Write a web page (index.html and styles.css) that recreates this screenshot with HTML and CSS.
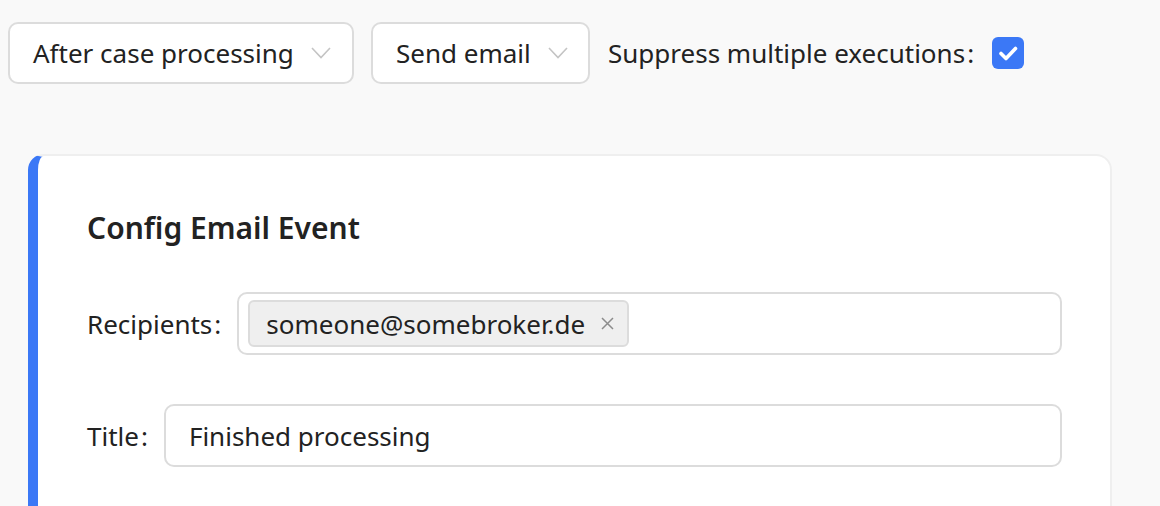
FILE: index.html
```html
<!DOCTYPE html>
<html>
<head>
<meta charset="utf-8">
<link rel="stylesheet" href="styles.css">
</head>
<body>
<div class="page">
  <div class="toolbar">
    <div class="select sel-1">
      <span class="select-text">After case processing</span>
      <svg class="chev" viewBox="0 0 20 12" width="20" height="12"><path d="M1 1 L10 10.5 L19 1" fill="none" stroke="#c4c4c4" stroke-width="1.6"/></svg>
    </div>
    <div class="select sel-2">
      <span class="select-text">Send email</span>
      <svg class="chev" viewBox="0 0 20 12" width="20" height="12"><path d="M1 1 L10 10.5 L19 1" fill="none" stroke="#c4c4c4" stroke-width="1.6"/></svg>
    </div>
    <div class="suppress">
      <span class="label">Suppress multiple executions<span class="colon">:</span></span>
      <span class="checkbox">
        <svg viewBox="0 0 32 32" width="32" height="32"><path d="M9 16.5 L14 21.5 L23.5 11.5" fill="none" stroke="#fff" stroke-width="3.6" stroke-linecap="round" stroke-linejoin="round"/></svg>
      </span>
    </div>
  </div>

  <div class="card">
    <h2 class="card-title">Config Email Event</h2>
    <div class="form-row">
      <span class="label">Recipients<span class="colon">:</span></span>
      <div class="input tags">
        <span class="tag">someone@somebroker.de<svg class="tag-x" viewBox="0 0 13 13" width="13" height="13"><path d="M1 1 L12 12 M12 1 L1 12" stroke="#8c8c8c" stroke-width="1.5" fill="none"/></svg></span>
      </div>
    </div>
    <div class="form-row">
      <span class="label">Title<span class="colon">:</span></span>
      <div class="input">Finished processing</div>
    </div>
  </div>
</div>
</body>
</html>
```
FILE: styles.css
```css
html, body {
  margin: 0;
  padding: 0;
  background: #f9f9f9;
  font-family: "Noto Sans", "Open Sans", sans-serif;
  color: #222;
}
.page {
  padding: 22px 8px 0 8px;
  height: 506px;
  box-sizing: border-box;
  overflow: hidden;
}
.toolbar {
  display: flex;
  align-items: center;
  gap: 17px;
  height: 62px;
}
.select {
  box-sizing: border-box;
  height: 62px;
  display: flex;
  align-items: center;
  gap: 17px;
  background: #fff;
  border: 2px solid #dcdcdc;
  border-radius: 10px;
  padding: 0 22px 0 23px;
  font-size: 26px;
}
.sel-1 { width: 346px; }
.sel-2 { width: 219px; }
.chev { flex: none; }
.select-text { white-space: nowrap; }
.suppress {
  display: flex;
  align-items: center;
  font-size: 26px;
  margin-left: 1px;
}
.colon {
  margin: 0 0 0 2px;
}
.checkbox {
  width: 32px;
  height: 32px;
  border-radius: 6px;
  background: #3b78f6;
  display: inline-flex;
  margin-left: 18px;
}
.card {
  margin: 70px 40px 0 20px;
  background: #fff;
  border: 2px solid #efefef;
  border-left: 10px solid #3b78f6;
  border-radius: 16px 16px 0 0;
  padding: 52px 48px 40px 49px;
  height: 400px;
}
.card-title {
  margin: 0 0 44px 0;
  font-size: 30px;
  font-weight: 600;
  line-height: 40px;
}
.form-row {
  display: flex;
  align-items: center;
  font-size: 26px;
  margin-bottom: 49px;
}
.form-row .label {
  margin-right: 16px;
  white-space: nowrap;
}
.input {
  flex: 1;
  box-sizing: border-box;
  height: 63px;
  border: 2px solid #dcdcdc;
  border-radius: 10px;
  display: flex;
  align-items: center;
  padding: 0 23px;
}
.input.tags {
  padding: 0 9px;
}
.tag {
  box-sizing: border-box;
  height: 47px;
  display: inline-flex;
  align-items: center;
  background: #efefef;
  border: 2px solid #dcdcdc;
  border-radius: 6px;
  padding: 0 13px 0 16px;
}
.tag-x {
  margin-left: 16px;
  flex: none;
}
```
